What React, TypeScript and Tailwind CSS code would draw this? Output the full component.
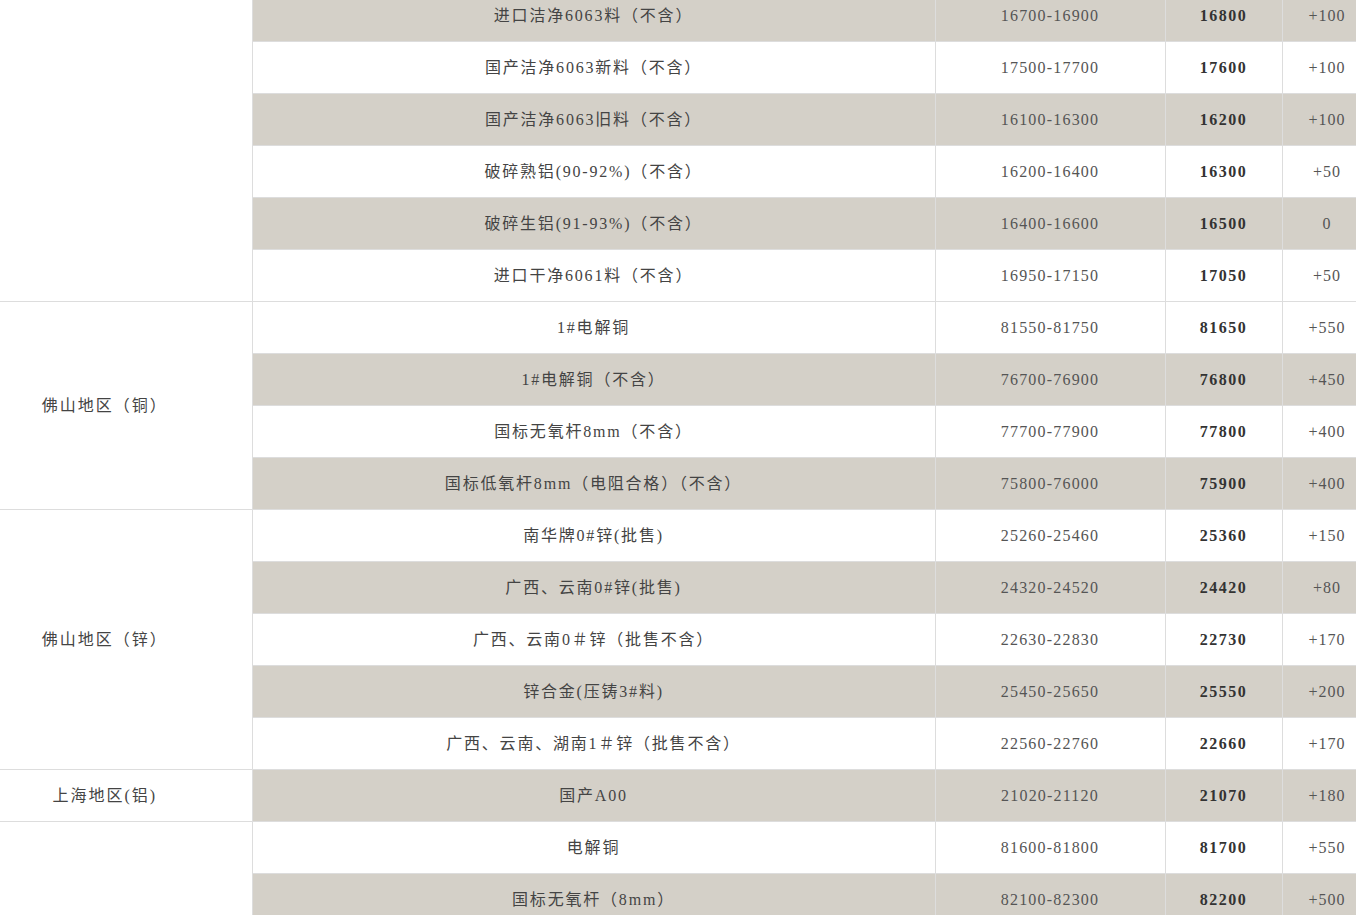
import React from "react";

type Row = { name: string; range: string; avg: string; chg: string; gray: boolean };
type Group = { label: string; rows: Row[] };

const groups: Group[] = [
  {
    label: "",
    rows: [
      { name: "进口洁净6063料（不含）", range: "16700-16900", avg: "16800", chg: "+100", gray: true },
      { name: "国产洁净6063新料（不含）", range: "17500-17700", avg: "17600", chg: "+100", gray: false },
      { name: "国产洁净6063旧料（不含）", range: "16100-16300", avg: "16200", chg: "+100", gray: true },
      { name: "破碎熟铝(90-92%)（不含）", range: "16200-16400", avg: "16300", chg: "+50", gray: false },
      { name: "破碎生铝(91-93%)（不含）", range: "16400-16600", avg: "16500", chg: "0", gray: true },
      { name: "进口干净6061料（不含）", range: "16950-17150", avg: "17050", chg: "+50", gray: false },
    ],
  },
  {
    label: "佛山地区（铜）",
    rows: [
      { name: "1#电解铜", range: "81550-81750", avg: "81650", chg: "+550", gray: false },
      { name: "1#电解铜（不含）", range: "76700-76900", avg: "76800", chg: "+450", gray: true },
      { name: "国标无氧杆8mm（不含）", range: "77700-77900", avg: "77800", chg: "+400", gray: false },
      { name: "国标低氧杆8mm（电阻合格）（不含）", range: "75800-76000", avg: "75900", chg: "+400", gray: true },
    ],
  },
  {
    label: "佛山地区（锌）",
    rows: [
      { name: "南华牌0#锌(批售)", range: "25260-25460", avg: "25360", chg: "+150", gray: false },
      { name: "广西、云南0#锌(批售)", range: "24320-24520", avg: "24420", chg: "+80", gray: true },
      { name: "广西、云南0＃锌（批售不含）", range: "22630-22830", avg: "22730", chg: "+170", gray: false },
      { name: "锌合金(压铸3#料)", range: "25450-25650", avg: "25550", chg: "+200", gray: true },
      { name: "广西、云南、湖南1＃锌（批售不含）", range: "22560-22760", avg: "22660", chg: "+170", gray: false },
    ],
  },
  {
    label: "上海地区(铝)",
    rows: [{ name: "国产A00", range: "21020-21120", avg: "21070", chg: "+180", gray: true }],
  },
  {
    label: "",
    rows: [
      { name: "电解铜", range: "81600-81800", avg: "81700", chg: "+550", gray: false },
      { name: "国标无氧杆（8mm）", range: "82100-82300", avg: "82200", chg: "+500", gray: true },
    ],
  },
];

export default function App() {
  const font = { fontFamily: '"Liberation Serif", "Noto Sans CJK SC", serif' };
  return (
    <div className="w-[1356px] h-[915px] overflow-hidden bg-white">
      <table
        className="-mt-[11px] w-[1372px] table-fixed border-collapse text-[16px] text-[#555]"
        style={font}
      >
        <colgroup>
          <col className="w-[252px]" />
          <col className="w-[683px]" />
          <col className="w-[230px]" />
          <col className="w-[117px]" />
          <col className="w-[90px]" />
        </colgroup>
        <tbody>
          {groups.map((g, gi) =>
            g.rows.map((r, ri) => {
              const bg = r.gray ? "bg-[#d4d0c8]" : "bg-white";
              return (
                <tr key={`${gi}-${ri}`} className="h-[52px]">
                  {ri === 0 && (
                    <td
                      rowSpan={g.rows.length}
                      className="border border-l-0 border-[#dddddd] bg-white pr-[42px] text-center align-middle text-[#444] tracking-[2px]"
                    >
                      {g.label}
                    </td>
                  )}
                  <td className={`border border-[#dddddd] ${bg} text-center align-middle text-[#444] tracking-[1.8px]`}>
                    {r.name}
                  </td>
                  <td className={`border border-[#dddddd] ${bg} text-center align-middle tracking-[1.2px]`}>
                    {r.range}
                  </td>
                  <td className={`border border-[#dddddd] ${bg} text-center align-middle font-bold text-[#333] tracking-[1.5px]`}>
                    {r.avg}
                  </td>
                  <td className={`border border-[#dddddd] ${bg} text-center align-middle tracking-[1px]`}>
                    {r.chg}
                  </td>
                </tr>
              );
            })
          )}
        </tbody>
      </table>
    </div>
  );
}
